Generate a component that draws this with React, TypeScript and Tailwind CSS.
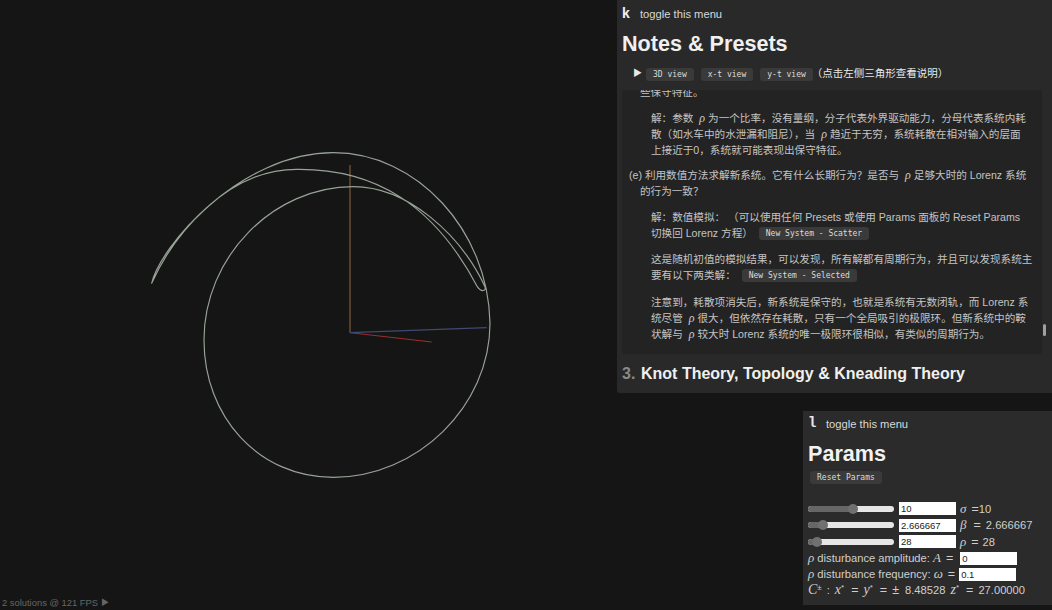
import React from "react";

const loopPath =
  "M35 430C60 320 300 38 580 38C830 38 1045 270 1050 550C1050 800 830 1012 580 1012C355 1012 192 830 192 600C192 350 400 140 640 140C800 140 960 280 1035 440C1040 455 1022 456 1012 440C880 190 700 85 470 88C260 88 100 285 35 430Z";

const Code = ({ children }: { children: React.ReactNode }) => (
  <span className="inline-block h-[13px] rounded-[3px] bg-[#3a3a3a] px-[7px] font-['DejaVu_Sans_Mono',monospace] text-[8px] leading-[13px] text-[#dcdcdc] align-[1px]">{children}</span>
);
const Rho = () => <i className="mx-[3px] font-['Liberation_Serif',serif] text-[12px] text-[#d0d0d0]">ρ</i>;
const M = ({ children }: { children: React.ReactNode }) => <i className="font-['Liberation_Serif',serif] text-[13px]">{children}</i>;
const Eq = () => <span className="ml-[5px] mr-[4px] text-[12.5px]">=</span>;
const BigEq = () => <span className="ml-[7px] mr-[5px] text-[12.5px]">=</span>;
const Star = () => <sup className="text-[8px]">*</sup>;

const Slider = ({ pct }: { pct: number }) => (
  <div className="relative flex h-[6px] w-[86px] overflow-visible rounded-full bg-[#e6e6e6]">
    <div className="h-full rounded-l-full bg-[#666666]" style={{ width: `${pct}%` }} />
    <div className="absolute top-[-2px] size-[10px] rounded-full bg-[#707070]" style={{ left: `calc(${pct}% - 5px)` }} />
  </div>
);
const Field = ({ v, w }: { v: string; w: string }) => (
  <input readOnly value={v} className={`${w} h-[13px] bg-white px-[2px] text-[9.5px] leading-[13px] text-[#222222] outline-none`} />
);

export default function App() {
  return (
    <div className="relative h-[610px] w-[1052px] overflow-hidden bg-[#151515] font-['Liberation_Sans','Noto_Sans_CJK_SC',sans-serif]">
      <svg className="absolute left-[140px] top-[140px] h-[350px] w-[360px]" viewBox="0 0 1080 1050" fill="none">
        <path d="M630 75V578" stroke="#95683c" strokeWidth="3" />
        <path d="M630 578L875 606" stroke="#9c2f2c" strokeWidth="3" />
        <path d="M630 578L1040 563" stroke="#3f4a70" strokeWidth="3.5" />
        <path d={loopPath} stroke="#98a398" strokeWidth="3.5" strokeLinejoin="round" />
      </svg>

      <div className="absolute bottom-0 left-[2px] flex h-[14px] items-center text-[9.4px] text-[#666666]">
        2 solutions @ 121 FPS <span className="ml-[3px] text-[8px]">▶</span>
      </div>

      <div className="absolute right-0 top-0 flex h-[393px] w-[435px] flex-col rounded-bl-[3px] bg-[#292929] pl-[5px] text-[#f0f0f0]">
        <div className="flex h-[27px] items-center">
          <b className="w-[18px] text-[14px] font-bold">k</b>
          <span className="translate-y-[1px] text-[11.2px] text-[#d8d8d8]">toggle this menu</span>
        </div>
        <h1 className="mt-[3px] h-[28px] text-[21.6px] font-bold leading-[28px]">Notes &amp; Presets</h1>
        <div className="mt-[8px] flex h-[16px] items-center pl-[11px] text-[10.5px] text-[#e8e8e8]">
          <span className="mr-[4px] w-[9px] text-[9px]">▶</span>
          <div className="flex gap-[7px]">
            <Code>3D view</Code>
            <Code>x-t view</Code>
            <Code>y-t view</Code>
          </div>
          <span className="ml-[-1px]">（点击左侧三角形查看说明）</span>
        </div>
        <div className="mt-[8px] h-[264px] w-[420px] overflow-hidden rounded-[3px] bg-[#232323] text-[10.6px] leading-[16px] text-[#c4c4c4]">
          <p className="mt-[-6px] pl-[18px]">些保守特征。</p>
          <p className="mt-[10px] pl-[29px] pr-[12px]">解：参数 <Rho />为一个比率，没有量纲，分子代表外界驱动能力，分母代表系统内耗散（如水车中的水泄漏和阻尼），当 <Rho />趋近于无穷，系统耗散在相对输入的层面上接近于0，系统就可能表现出保守特征。</p>
          <p className="mt-[9px] pl-[18px] pr-[8px] -indent-[11px]">(e) 利用数值方法求解新系统。它有什么长期行为？是否与 <Rho />足够大时的 Lorenz 系统的行为一致？</p>
          <p className="mt-[10px] pl-[29px] pr-[12px]">解：数值模拟： （可以使用任何 Presets 或使用 Params 面板的 Reset Params 切换回 Lorenz 方程） <span className="ml-[3px]"><Code>New System - Scatter</Code></span></p>
          <p className="mt-[10px] pl-[29px] pr-[8px]">这是随机初值的模拟结果，可以发现，所有解都有周期行为，并且可以发现系统主要有以下两类解： <span className="ml-[3px]"><Code>New System - Selected</Code></span></p>
          <p className="mt-[11px] pl-[29px] pr-[8px]">注意到，耗散项消失后，新系统是保守的，也就是系统有无数闭轨，而 Lorenz 系统尽管 <Rho />很大，但依然存在耗散，只有一个全局吸引的极限环。但新系统中的鞍状解与 <Rho />较大时 Lorenz 系统的唯一极限环很相似，有类似的周期行为。</p>
        </div>
        <div className="mt-[9px] flex h-[22px] items-center text-[16px] font-bold">
          <span className="w-[19px] text-[#8a8a8a]">3.</span>
          <span>Knot Theory, Topology &amp; Kneading Theory</span>
        </div>
        <div className="absolute left-[426px] top-[324px] h-[12px] w-[3px] rounded-full bg-[#a0a0a0]" />
      </div>

      <div className="absolute right-0 top-[411px] flex h-[194px] w-[249px] flex-col bg-[#2b2b2b] pl-[5px] text-[#e8e8e8]">
        <div className="flex h-[24px] items-center pt-[1px]">
          <b className="w-[18px] font-['Liberation_Mono',monospace] text-[14px] font-bold">l</b>
          <span className="translate-y-[1px] text-[11.2px] text-[#d8d8d8]">toggle this menu</span>
        </div>
        <h2 className="mt-[6px] h-[26px] text-[21.6px] font-bold leading-[26px] text-[#f2f2f2]">Params</h2>
        <div className="ml-[2px] mt-[4px] flex h-[13px]"><Code>Reset Params</Code></div>
        <div className="mt-[16px] flex flex-col text-[11.2px] text-[#cfcfcf]">
          <div className="flex h-[17px] items-center"><Slider pct={52} /><span className="ml-[5px] flex"><Field v="10" w="w-[57px]" /></span><span className="ml-[4px]"><M>σ</M><span className="ml-[5px] text-[12.5px]">=</span>10</span></div>
          <div className="flex h-[16px] items-center"><Slider pct={18} /><span className="ml-[5px] flex"><Field v="2.666667" w="w-[57px]" /></span><span className="ml-[4px]"><M>β</M><BigEq />2.666667</span></div>
          <div className="flex h-[17px] items-center"><Slider pct={11} /><span className="ml-[5px] flex"><Field v="28" w="w-[57px]" /></span><span className="ml-[4px]"><M>ρ</M><Eq />28</span></div>
          <div className="flex h-[16px] items-center gap-[3px]"><span><M>ρ</M> disturbance amplitude: <M>A</M><Eq /></span><Field v="0" w="w-[57px]" /></div>
          <div className="flex h-[16px] items-center"><span><M>ρ</M> disturbance frequency: <M>ω</M><Eq /></span><Field v="0.1" w="w-[57px]" /></div>
          <div className="flex h-[15px] items-center whitespace-nowrap">
            <span>
              <i className="font-['Liberation_Serif',serif] text-[14px]">C</i>
              <sup className="text-[8px]">±</sup>
              <span className="mx-[5px]">:</span>
              <i className="font-['Liberation_Serif',serif] text-[14px]">x</i><Star />
              <BigEq />
              <i className="font-['Liberation_Serif',serif] text-[14px]">y</i><Star />
              <BigEq />
              <span className="mr-[6px] text-[12.5px]">±</span>8.48528
              <i className="ml-[5px] font-['Liberation_Serif',serif] text-[14px]">z</i><Star />
              <BigEq />27.00000
            </span>
          </div>
        </div>
      </div>
    </div>
  );
}
